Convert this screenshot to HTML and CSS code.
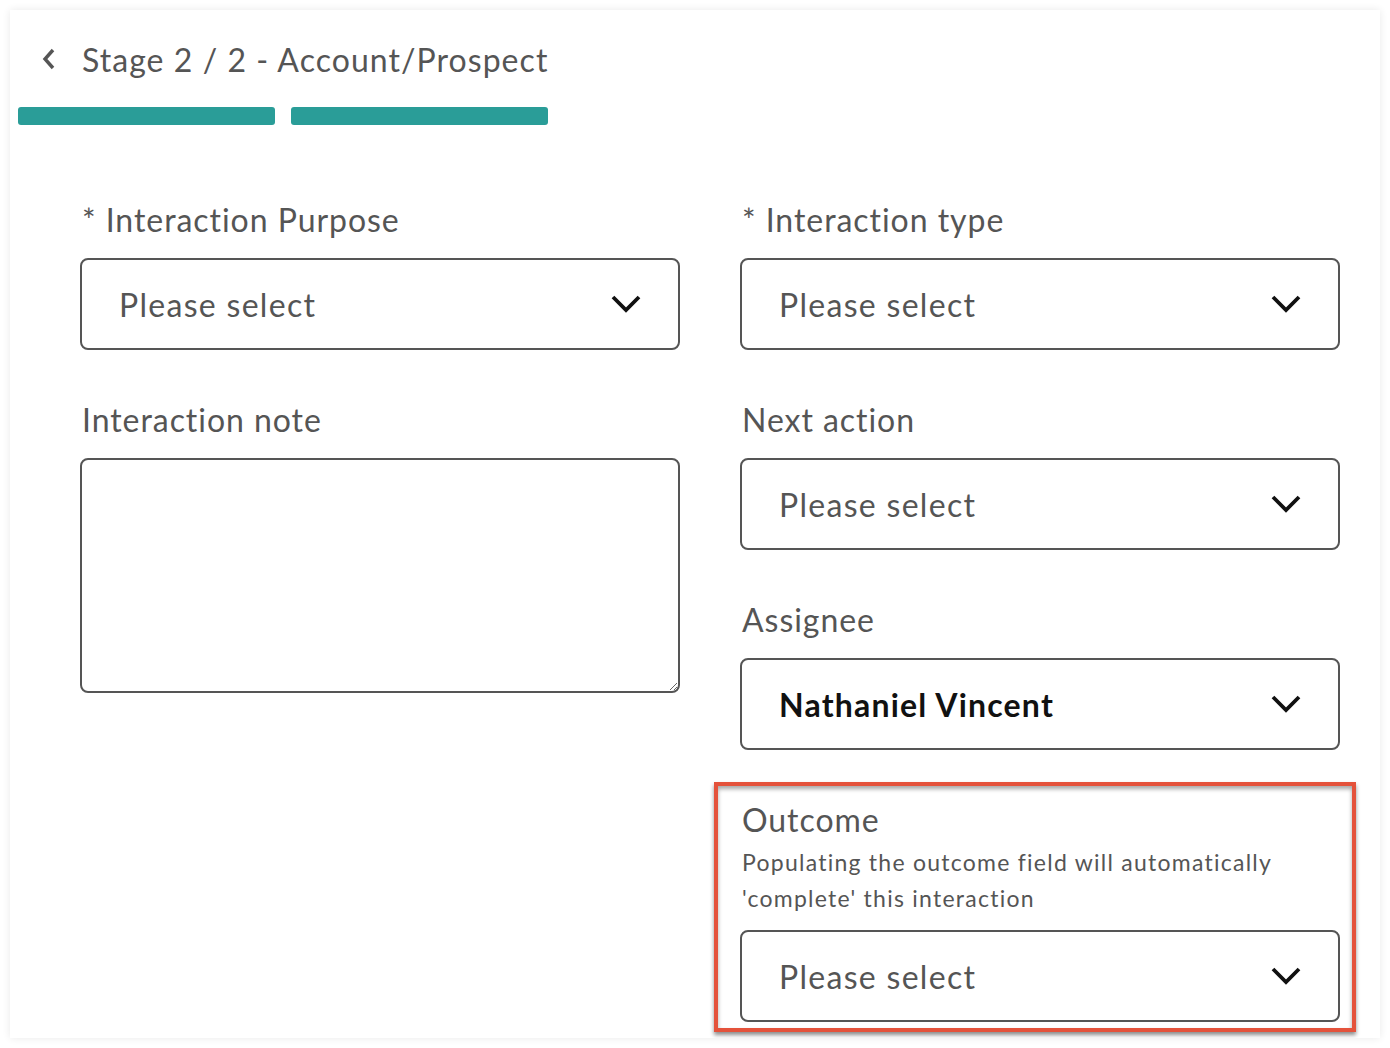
FILE: index.html
```html
<!DOCTYPE html>
<html lang="en">
<head>
    <meta charset="UTF-8">
    <title>Log interaction</title>
    <link rel="stylesheet" href="styles.css">
</head>
<body>
    <div class="card">
        <div class="head">
            <svg class="back" width="18" height="26" viewBox="0 0 18 26"><path d="M13 4 L5 13 L13 22" fill="none" stroke="#555" stroke-width="3.4"/></svg>
            <h1 class="title">Stage 2 / 2 - Account/Prospect</h1>
        </div>
        <div class="steps">
            <div class="step"></div>
            <div class="step"></div>
        </div>

        <div class="form">
            <div class="col">
                <div class="field">
                    <label class="lbl">* Interaction Purpose</label>
                    <div class="select"><span>Please select</span><svg class="chev" width="32" height="20" viewBox="0 0 32 20"><path d="M3 3 L16 16 L29 3" fill="none" stroke="#111" stroke-width="3.8"/></svg></div>
                </div>
                <div class="field">
                    <label class="lbl">Interaction note</label>
                    <textarea class="note"></textarea>
                </div>
            </div>
            <div class="col">
                <div class="field">
                    <label class="lbl">* Interaction type</label>
                    <div class="select"><span>Please select</span><svg class="chev" width="32" height="20" viewBox="0 0 32 20"><path d="M3 3 L16 16 L29 3" fill="none" stroke="#111" stroke-width="3.8"/></svg></div>
                </div>
                <div class="field">
                    <label class="lbl">Next action</label>
                    <div class="select"><span>Please select</span><svg class="chev" width="32" height="20" viewBox="0 0 32 20"><path d="M3 3 L16 16 L29 3" fill="none" stroke="#111" stroke-width="3.8"/></svg></div>
                </div>
                <div class="field">
                    <label class="lbl">Assignee</label>
                    <div class="select filled"><span>Nathaniel Vincent</span><svg class="chev" width="32" height="20" viewBox="0 0 32 20"><path d="M3 3 L16 16 L29 3" fill="none" stroke="#111" stroke-width="3.8"/></svg></div>
                </div>
                <div class="field outcome">
                    <label class="lbl">Outcome</label>
                    <p class="hint">Populating the outcome field will automatically 'complete' this interaction</p>
                    <div class="select"><span>Please select</span><svg class="chev" width="32" height="20" viewBox="0 0 32 20"><path d="M3 3 L16 16 L29 3" fill="none" stroke="#111" stroke-width="3.8"/></svg></div>
                </div>
            </div>
        </div>
    </div>
</body>
</html>
```

FILE: styles.css
```css
body{
    margin: 0;
    background-color: #fff;
    font-family: Lato, 'Noto Sans', sans-serif;
    color: #555;
}
.card{
    margin: 10px;
    height: 1028px;
    background-color: #fff;
    box-shadow: 0 0 8px rgba(0, 0, 0, 0.09);
    overflow: hidden;
}
.head{
    display: flex;
    align-items: center;
    padding: 29px 0 0 30px;
    height: 40px;
}
.back{
    margin-right: 24px;
}
.title{
    margin: 0;
    font-size: 32px;
    font-weight: 400;
    color: #555;
    letter-spacing: 1.05px;
}
.steps{
    display: flex;
    gap: 16px;
    padding: 28px 0 0 8px;
}
.step{
    width: 257px;
    height: 18px;
    border-radius: 3px;
    background-color: #2a9d98;
}
.form{
    display: grid;
    grid-template-columns: 600px 600px;
    column-gap: 60px;
    padding: 75px 0 0 70px;
}
.col{
    display: flex;
    flex-direction: column;
    gap: 50px;
}
.field{
    display: flex;
    flex-direction: column;
}
.lbl{
    font-size: 32px;
    line-height: 40px;
    margin: 0 0 18px 2px;
    letter-spacing: 0.95px;
    color: #555;
}
.select{
    height: 88px;
    border: 2px solid #555;
    border-radius: 8px;
    display: flex;
    align-items: center;
    justify-content: space-between;
    padding: 0 36px 0 37px;
    font-size: 32px;
    letter-spacing: 1.3px;
    color: #555;
}
.select.filled{
    color: #111;
    font-weight: 700;
    letter-spacing: 1.2px;
}
.chev{
    display: block;
}
.note{
    height: 231px;
    border: 2px solid #555;
    border-radius: 8px;
    padding: 0;
    margin: 0;
    resize: vertical;
    font-family: inherit;
}
.hint{
    margin: -14px 0 14px 2px;
    padding-right: 40px;
    font-size: 23px;
    line-height: 36px;
    letter-spacing: 1.25px;
    color: #555;
}
.outcome{
    position: relative;
}
.outcome::after{
    content: "";
    position: absolute;
    left: -26px;
    right: -16px;
    top: -18px;
    bottom: -10px;
    border: 4px solid #e4523b;
    box-shadow: 0 3px 4px rgba(0, 0, 0, 0.45), inset 0 3px 4px rgba(0, 0, 0, 0.35);
    pointer-events: none;
}
```
